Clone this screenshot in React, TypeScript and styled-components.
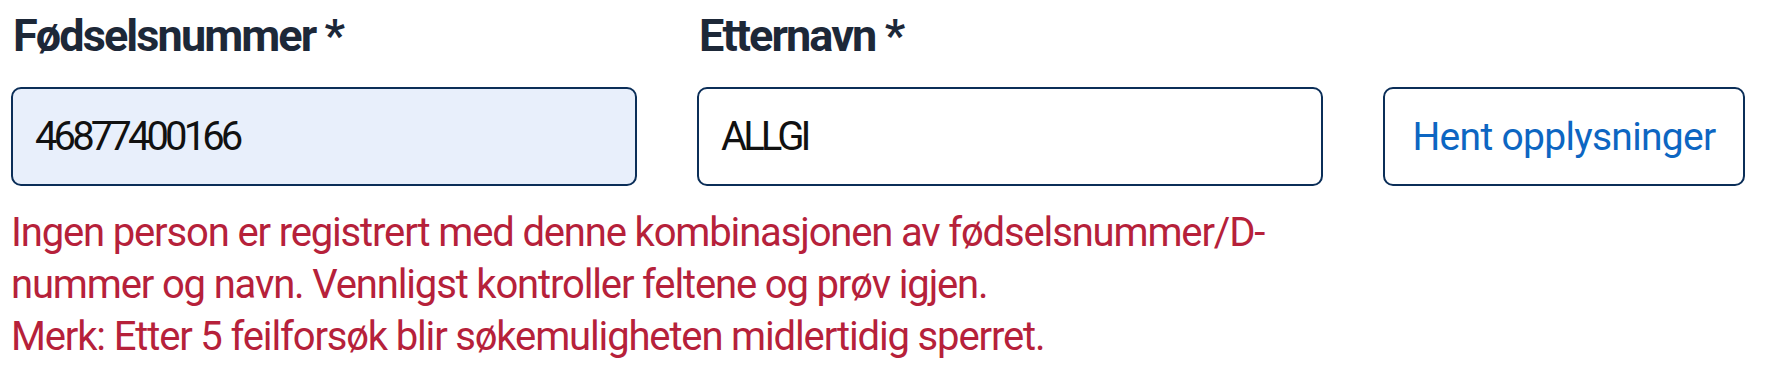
import { createGlobalStyle, styled } from "styled-components";

const GlobalStyle = createGlobalStyle`
  html, body {
    margin: 0;
    padding: 0;
    background: #ffffff;
  }
  body {
    font-family: Roboto, "Liberation Sans", sans-serif;
  }
`;

const Page = styled.div`
  padding: 8px 11px 0 11px;
`;

const Form = styled.form`
  display: grid;
  grid-template-columns: 626px 626px 362px;
  column-gap: 60px;
  align-items: end;
`;

const Field = styled.div`
  display: flex;
  flex-direction: column;
`;

const Label = styled.label`
  font-size: 45px;
  line-height: 56px;
  font-weight: 700;
  letter-spacing: -1.9px;
  color: #1d2838;
  margin-bottom: 23px;
  padding-left: 2px;
`;

const Input = styled.input<{ $filled?: boolean }>`
  box-sizing: border-box;
  height: 99px;
  width: 100%;
  border: 2.5px solid #0b2e58;
  border-radius: 10px;
  background: ${(p) => (p.$filled ? "#e8effb" : "#ffffff")};
  padding: 0 22px;
  font-family: inherit;
  font-size: 40px;
  letter-spacing: -3.9px;
  color: #111111;
  outline: none;
`;

const Button = styled.button`
  box-sizing: border-box;
  height: 99px;
  width: 100%;
  border: 2.5px solid #0b2e58;
  border-radius: 10px;
  background: #ffffff;
  color: #0d66c2;
  font-family: inherit;
  font-size: 39px;
  letter-spacing: -0.7px;
  cursor: pointer;
`;

const ErrorText = styled.div`
  grid-column: 1 / 3;
  margin-top: 21px;
  max-width: 1290px;
  font-size: 40px;
  line-height: 52px;
  letter-spacing: -1.15px;
  color: #b6213a;
`;

const Line = styled.p`
  margin: 0;
`;

export default function App() {
  return (
    <Page>
      <GlobalStyle />
      <Form onSubmit={(e) => e.preventDefault()}>
        <Field>
          <Label htmlFor="fnr">Fødselsnummer *</Label>
          <Input id="fnr" $filled defaultValue="46877400166" />
        </Field>
        <Field>
          <Label htmlFor="etternavn">Etternavn *</Label>
          <Input id="etternavn" defaultValue="ALLGI" />
        </Field>
        <Button type="submit">Hent opplysninger</Button>
        <ErrorText>
          <Line>
            Ingen person er registrert med denne kombinasjonen av
            fødselsnummer/D-nummer og navn. Vennligst kontroller feltene og
            prøv igjen.
          </Line>
          <Line>Merk: Etter 5 feilforsøk blir søkemuligheten midlertidig sperret.</Line>
        </ErrorText>
      </Form>
    </Page>
  );
}
